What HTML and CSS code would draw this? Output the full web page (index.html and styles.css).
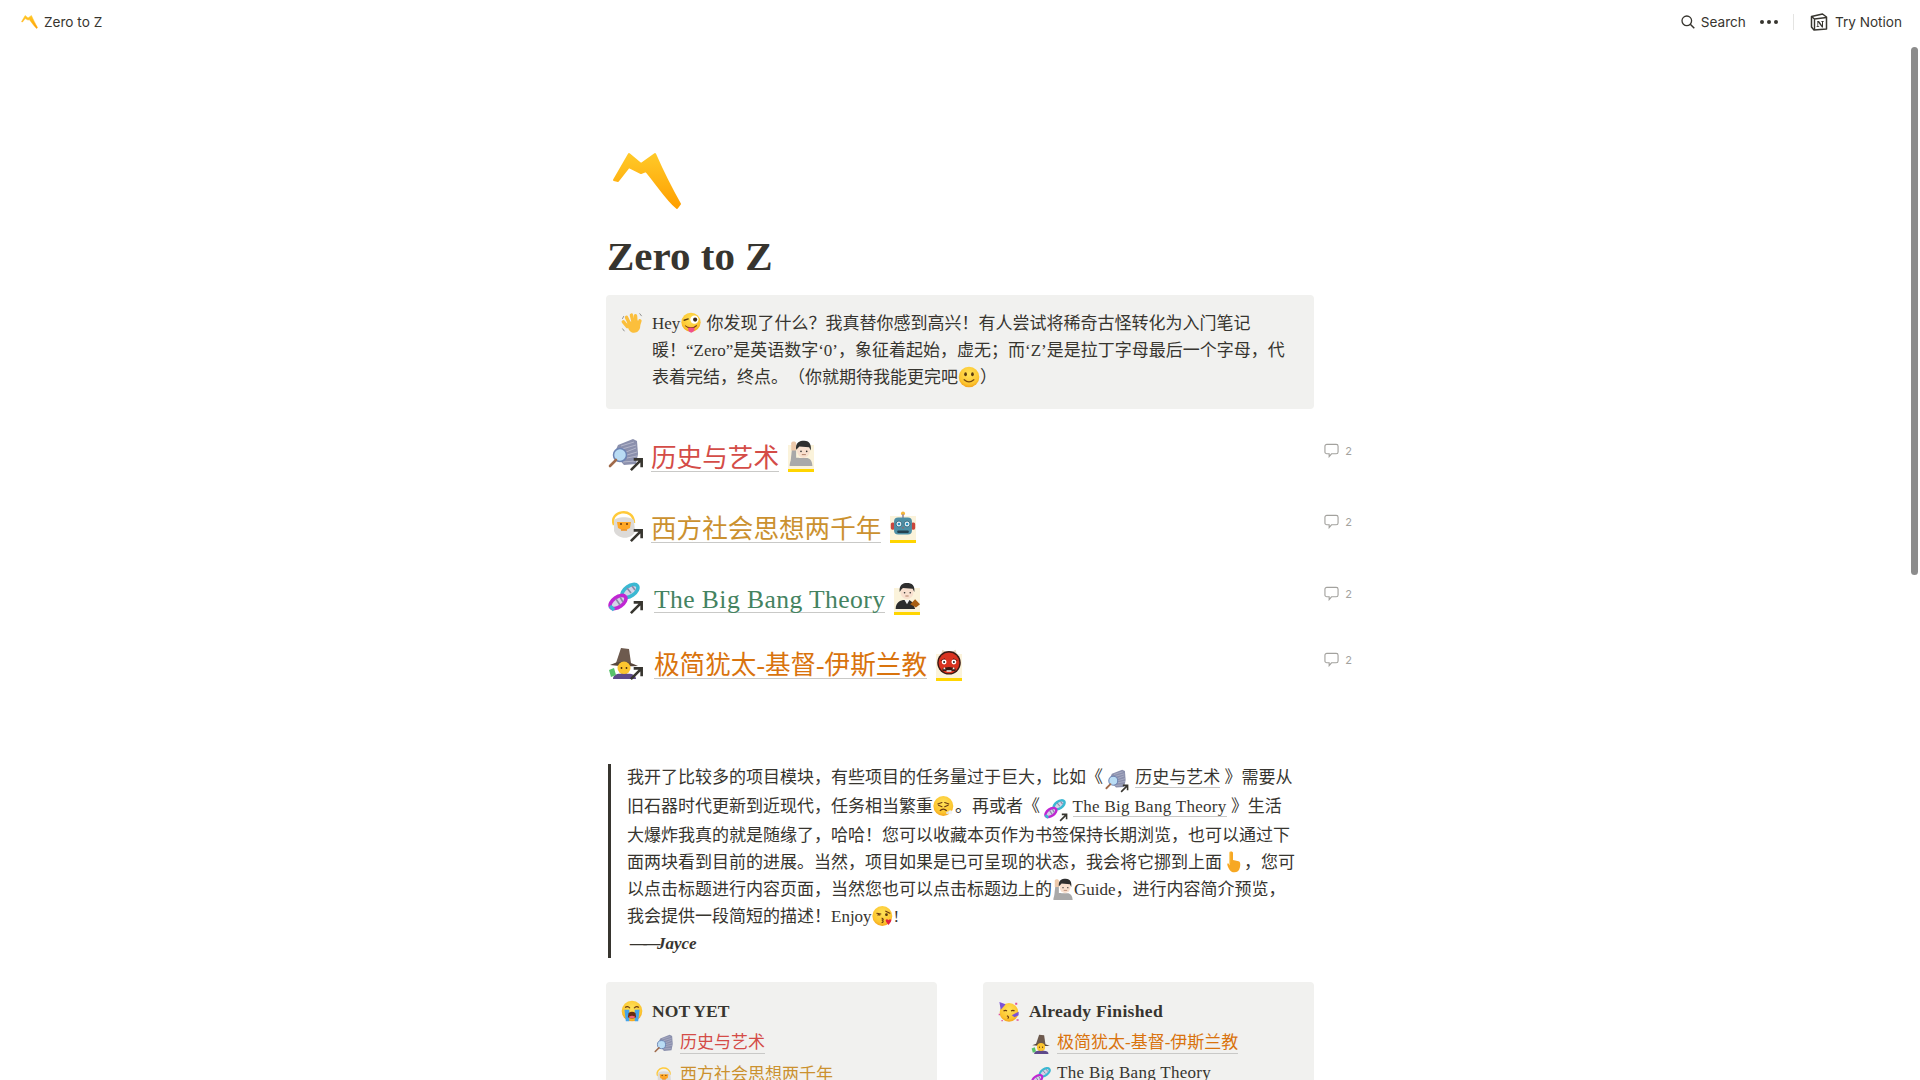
FILE: index.html
```html
<!DOCTYPE html>
<html>
	<head>
		<meta charset="utf-8">
		<title>Zero to Z</title>
		<link rel="stylesheet" href="styles.css">
	</head>
	<body>
		<svg class="defs" xmlns="http://www.w3.org/2000/svg">
			<defs>
				<linearGradient id="g-logo" x1="0" y1="0" x2="0" y2="1"><stop offset="0" stop-color="#ffc928"/><stop offset="1" stop-color="#ff9f00"/></linearGradient>
				<radialGradient id="g-face" cx=".5" cy=".35" r=".7"><stop offset="0" stop-color="#ffe259"/><stop offset=".7" stop-color="#fcc52f"/><stop offset="1" stop-color="#f29a17"/></radialGradient>
				<symbol id="e-logo" viewBox="0 0 70 58"><path d="M2 28 17 2 29 12 43 2C50 18 60 38 68 52L65 56C55 48 45 32 34 19L29 21 17 15 6 29Z" fill="url(#g-logo)" stroke="url(#g-logo)" stroke-width="2" stroke-linejoin="round"/></symbol>
				<symbol id="e-wave" viewBox="0 0 32 32"><g fill="#fbbf3c"><rect x="14" y="2" width="5" height="16" rx="2.5" transform="rotate(-14 16 10)"/><rect x="19" y="3" width="5" height="16" rx="2.5" transform="rotate(-4 21 11)"/><rect x="8" y="5" width="5" height="16" rx="2.5" transform="rotate(-26 10 13)"/><rect x="4" y="11" width="5" height="14" rx="2.5" transform="rotate(-40 6 18)"/><rect x="24" y="10" width="5" height="13" rx="2.5" transform="rotate(18 26 16)"/><path d="M9 15 24 12 28 20C28 27 23 31 17 30 12 29 9 23 9 15Z"/></g><path d="M2 10 4 6M2 24 5 28M27 2 30 6" stroke="#8c8c8c" stroke-width="1.4" fill="none"/></symbol>
				<symbol id="e-wink" viewBox="0 0 32 32"><circle cx="16" cy="15" r="14" fill="url(#g-face)"/><path d="M6 12 12 10" stroke="#5a3a10" stroke-width="2" stroke-linecap="round"/><circle cx="21" cy="11" r="6" fill="#fff"/><circle cx="22" cy="11" r="3" fill="#3a2a1a"/><path d="M7 19Q16 26 25 18L24 21Q16 28 8 21Z" fill="#7a3a18"/><path d="M12 23H21V27Q16 33 12 27Z" fill="#f0508a"/></symbol>
				<symbol id="e-smile" viewBox="0 0 32 32"><circle cx="16" cy="16" r="15" fill="url(#g-face)"/><ellipse cx="11" cy="12" rx="2" ry="3" fill="#5a3a10"/><ellipse cx="21" cy="12" rx="2" ry="3" fill="#5a3a10"/><path d="M9 20Q16 26 23 20" stroke="#7a4a10" stroke-width="1.8" fill="none" stroke-linecap="round"/></symbol>
				<symbol id="e-tablet" viewBox="0 0 32 32"><path d="M10 7 25 1 29 3 30 16 28 26 16 27 6 16Z" fill="#8b90ad"/><path d="M13 8 26 4M14 11 28 7M18 14 28 10M19 17 29 14M19 20 29 18M15 24 27 23" stroke="#b3b6ca" stroke-width="1"/><circle cx="12" cy="17" r="6.500" fill="#b9dcf4" stroke="#6d84b4" stroke-width="1.5"/><path d="M8 22 2 28" stroke="#a06a4a" stroke-width="2.6" stroke-linecap="round"/></symbol>
				<symbol id="e-raise" viewBox="0 0 32 32"><path d="M2 32C2 24 8 21 14 22H24C28 23 30 27 30 32Z" fill="#a9a9a9"/><path d="M3 28 5 10 10 10 10 24Z" fill="#a9a9a9"/><path d="M4 13V4C4 1 10 1 10 4V13Z" fill="#edc9ab"/><ellipse cx="19" cy="13" rx="8" ry="9" fill="#f8e0cf"/><path d="M10 12C9 3 14 1 20 1 27 1 29 7 28 13L26 9 14 8 12 10Z" fill="#2f2f2f"/><circle cx="16" cy="14" r="1" fill="#333"/><circle cx="23" cy="14" r="1" fill="#333"/><path d="M17 18H22" stroke="#a06a50" stroke-width="1"/></symbol>
				<symbol id="e-elder" viewBox="0 0 32 32"><path d="M6 16C0 2 26 -3 26 14" stroke="#ffca3a" stroke-width="2.4" fill="none"/><path d="M6 12C7 7 25 7 26 12L27 22C25 31 9 31 6 22Z" fill="#dcdad8"/><path d="M9 13H23L22 19Q16 23 10 19Z" fill="#ffa726"/><circle cx="13" cy="15" r="1" fill="#6a3a10"/><circle cx="19" cy="15" r="1" fill="#6a3a10"/><path d="M13 21H19" stroke="#ef8f20" stroke-width="1.5"/></symbol>
				<symbol id="e-robot" viewBox="0 0 32 32"><circle cx="16" cy="3" r="2.5" fill="#f4b63a"/><rect x="15" y="4" width="2" height="5" fill="#9a8aa0"/><rect x="1" y="14" width="5" height="9" rx="2" fill="#c9463d"/><rect x="26" y="14" width="5" height="9" rx="2" fill="#c9463d"/><rect x="5" y="8" width="22" height="21" rx="5" fill="#4d8fa5"/><circle cx="11" cy="16" r="3.6" fill="#e7f7fb" stroke="#2f5d70"/><circle cx="21" cy="16" r="3.6" fill="#e7f7fb" stroke="#2f5d70"/><circle cx="11" cy="16" r="1.6" fill="#2a93c4"/><circle cx="21" cy="16" r="1.6" fill="#2a93c4"/><path d="M15 20 16 22 17 20Z" fill="#c9463d"/><rect x="9" y="24" width="14" height="3" rx="1" fill="#23414f"/></symbol>
				<symbol id="e-dna" viewBox="0 0 32 32"><g fill="#d4d3e8" stroke-width="3.600"><ellipse cx="22" cy="10" rx="9" ry="5" transform="rotate(-35 22 10)" stroke="#3bb8d2"/><ellipse cx="10" cy="21" rx="9" ry="5" transform="rotate(-35 10 21)" stroke="#c026d3"/></g><path d="M2 25 6 29" stroke="#3bb8d2" stroke-width="3.600"/><path d="M8 18 12 24M12 16 15 21M19 7 23 12M24 5 27 9" stroke="#8b8aa8" stroke-width="1.600"/></symbol>
				<symbol id="e-judge" viewBox="0 0 32 32"><path d="M2 32C2 24 8 21 13 21H19L23 24 26 32Z" fill="#2c2c2c"/><path d="M13 21 16 26 19 21Z" fill="#f4f4f4"/><ellipse cx="16" cy="11" rx="8" ry="9" fill="#f8e0cf"/><path d="M7 11C6 2 11 0 16 0 22 0 26 3 25 11L23 7 11 6 9 8Z" fill="#2f2f2f"/><circle cx="13" cy="12" r="1" fill="#333"/><circle cx="20" cy="12" r="1" fill="#333"/><path d="M14 16H18" stroke="#a06a50"/><path d="M20 26 26 20 32 26 27 30Z" fill="#a85e12"/></symbol>
				<symbol id="e-witch" viewBox="0 0 32 32"><path d="M8 16 13 1 21 2 23 16Z" fill="#6d5a4e"/><path d="M2 18Q15 11 30 19Q16 20 2 18Z" fill="#57463c"/><circle cx="16" cy="21" r="6.5" fill="#fcc52f"/><circle cx="13.5" cy="21" r=".9" fill="#4a2c10"/><circle cx="18.500" cy="21" r=".9" fill="#4a2c10"/><path d="M5 32C5 27 10 26 16 27 23 26 28 27 28 32Z" fill="#5e4a8a"/><path d="M1 23 6 21 8 28 3 30Z" fill="#58c26a"/></symbol>
				<symbol id="e-ogre" viewBox="0 0 32 32"><path d="M6 7 8 1 13 4ZM26 7 24 1 19 4Z" fill="#e8d8c0"/><circle cx="16" cy="17" r="14.500" fill="#3a1a14"/><circle cx="16" cy="17" r="12.800" fill="#d9321f"/><path d="M5 14 12 16 11 11ZM27 14 20 16 21 11Z" fill="#7c1a12"/><circle cx="10" cy="16" r="3" fill="#fff"/><circle cx="22" cy="16" r="3" fill="#fff"/><circle cx="10" cy="16" r="1.200" fill="#222"/><circle cx="22" cy="16" r="1.200" fill="#222"/><path d="M8 24Q16 20 24 24V27H8Z" fill="#3a1a14"/><path d="M10 22 12 25H9ZM22 22 23 25H20ZM13 26H19V28H13Z" fill="#f4f0e6"/></symbol>
				<symbol id="e-tired" viewBox="0 0 32 32"><circle cx="15" cy="16" r="14.500" fill="url(#g-face)"/><path d="M7 13 13 11M23 13 17 11M8 15 13 17M22 15 17 17" stroke="#6a3a10" stroke-width="1.6" stroke-linecap="round"/><path d="M10 23Q15 18 20 23" stroke="#6a3a10" stroke-width="1.8" fill="none"/><circle cx="25" cy="25" r="3" fill="#f2f2f2"/><circle cx="21" cy="26" r="2" fill="#e2e2e2"/></symbol>
				<symbol id="e-point" viewBox="0 0 32 32"><path d="M11 3C11 0 16 0 16 3V13L24 15C27 16 27 20 26 24 25 29 22 31 18 31 13 31 10 27 8 21 7 18 9 17 10 19L11 21Z" fill="#f7a823"/><path d="M12 17V3C12 1 13 1 14 1L11 1 11 19Z" fill="#ffc84d"/></symbol>
				<symbol id="e-kiss" viewBox="0 0 32 32"><circle cx="15" cy="16" r="14.500" fill="url(#g-face)"/><path d="M7 12 13 13M20 9 26 12" stroke="#6a3a10" stroke-width="1.6" stroke-linecap="round"/><path d="M8 15Q10 13 12 15" stroke="#6a3a10" stroke-width="1.600" fill="none"/><circle cx="21" cy="14" r="2" fill="#5a3a10"/><path d="M14 19Q18 21 15 22Q18 24 14 26" stroke="#6a3a10" stroke-width="1.600" fill="none"/><path d="M21 25C18 21 22 19 24 22 26 19 30 21 27 25L24 29Z" fill="#e5213f"/></symbol>
				<symbol id="e-cry" viewBox="0 0 32 32"><circle cx="16" cy="16" r="15" fill="url(#g-face)"/><path d="M6 11Q10 8 13 12M19 12Q22 8 26 11" stroke="#6a3a10" stroke-width="1.800" fill="none"/><path d="M5 14H12V31H7ZM20 14H27L25 31H20Z" fill="#46a4ea"/><path d="M11 19Q16 15 21 19L22 25Q16 29 10 25Z" fill="#6a2c10"/><path d="M12 24Q16 22 20 24L21 25Q16 28 11 25Z" fill="#f0607a"/></symbol>
				<symbol id="e-party" viewBox="0 0 32 32"><circle cx="16" cy="18" r="13.500" fill="url(#g-face)"/><path d="M2 3 11 6 4 14Z" fill="#7b52d6"/><path d="M8 16Q11 14 13 16M19 16Q22 14 24 16" stroke="#6a3a10" stroke-width="1.800" fill="none"/><path d="M13 23Q17 25 14 27" stroke="#6a3a10" stroke-width="1.600" fill="none"/><path d="M20 22 30 17V22L24 25Z" fill="#7b52d6"/><path d="M25 4H28V7H25ZM1 20H3V22H1ZM27 28H30V30H27ZM5 29H7V31H5Z" fill="#e0509a"/></symbol>
				<symbol id="i-arrow" viewBox="0 0 16 16"><path d="M2 14 13.500 2.500M5 2.500H13.500V11" stroke="#37352f" stroke-width="2.800" fill="none"/></symbol>
				<symbol id="i-comment" viewBox="0 0 16 16"><path d="M3 1.500H13C14 1.500 15 2.500 15 3.500V9.500C15 10.500 14 11.500 13 11.500H8L5.500 14.500V11.500H3C2 11.500 1 10.500 1 9.500V3.500C1 2.500 2 1.500 3 1.500Z" fill="none" stroke="#a3a29e" stroke-width="1.200"/></symbol>
			</defs>
		</svg>

		<div class="topbar">
			<div class="crumb">
				<svg class="crumb-icon"><use href="#e-logo"/></svg>
				<span>Zero to Z</span>
			</div>
			<div class="actions">
				<svg class="search-icon" viewBox="0 0 14 14"><circle cx="5.800" cy="5.800" r="4.800" fill="none" stroke="#37352f" stroke-width="1.300"/><path d="M9.300 9.300 13.300 13.300" stroke="#37352f" stroke-width="1.500"/></svg>
				<span>Search</span>
				<span class="dots"><i></i><i></i><i></i></span>
				<span class="divider"></span>
				<svg class="notion-icon" viewBox="0 0 18 18"><path d="M1.500 3.500 12.500 1 16.500 4V16L4 17 1.500 14Z" fill="#fff" stroke="#37352f" stroke-width="1.500" stroke-linejoin="round"/><path d="M1.500 3.500 4.500 6 16.500 4.500M4.500 6V17" fill="none" stroke="#37352f" stroke-width="1.400"/><path d="M7.200 8H9L12 12.200V8.700H11.200V8H13.800V8.700H13V14.500H12L8.200 9.500V13.300H9.200V14H6.600V13.300H7.400V8.700H7.200Z" fill="#37352f"/></svg>
				<span>Try Notion</span>
			</div>
		</div>
		<div class="scrollbar"></div>

		<div class="page">
			<svg class="page-icon"><use href="#e-logo"/></svg>
			<h1 class="title">Zero to Z</h1>

			<div class="callout">
				<svg class="callout-icon"><use href="#e-wave"/></svg>
				<div class="callout-text">
					Hey<svg class="emoji"><use href="#e-wink"/></svg> 你发现了什么？我真替你感到高兴！有人尝试将稀奇古怪转化为入门笔记<br>
					暖！“Zero”是英语数字‘0’，象征着起始，虚无；而‘Z’是是拉丁字母最后一个字母，代<br>
					表着完结，终点。（你就期待我能更完吧<svg class="emoji"><use href="#e-smile"/></svg>）
				</div>
			</div>

			<div class="row row-1">
				<span class="row-icon"><svg class="big"><use href="#e-tablet"/></svg><svg class="arrow"><use href="#i-arrow"/></svg></span>
				<a class="row-link red">历史与艺术</a>
				<span class="mark"><svg><use href="#e-raise"/></svg></span>
				<span class="comments"><svg><use href="#i-comment"/></svg>2</span>
			</div>
			<div class="row row-2">
				<span class="row-icon"><svg class="big"><use href="#e-elder"/></svg><svg class="arrow"><use href="#i-arrow"/></svg></span>
				<a class="row-link yellow">西方社会思想两千年</a>
				<span class="mark"><svg><use href="#e-robot"/></svg></span>
				<span class="comments"><svg><use href="#i-comment"/></svg>2</span>
			</div>
			<div class="row row-3">
				<span class="row-icon wide"><svg class="big"><use href="#e-dna"/></svg><svg class="arrow"><use href="#i-arrow"/></svg></span>
				<a class="row-link latin green">The Big Bang Theory</a>
				<span class="mark"><svg><use href="#e-judge"/></svg></span>
				<span class="comments"><svg><use href="#i-comment"/></svg>2</span>
			</div>
			<div class="row row-4">
				<span class="row-icon wide"><svg class="big"><use href="#e-witch"/></svg><svg class="arrow"><use href="#i-arrow"/></svg></span>
				<a class="row-link orange">极简犹太-基督-伊斯兰教</a>
				<span class="mark"><svg><use href="#e-ogre"/></svg></span>
				<span class="comments"><svg><use href="#i-comment"/></svg>2</span>
			</div>

			<blockquote class="quote">
				<div class="quote-text">
					我开了比较多的项目模块，有些项目的任务量过于巨大，比如《<span class="mention first"><svg class="emoji m"><use href="#e-tablet"/></svg><svg class="arrow"><use href="#i-arrow"/></svg></span> <a class="inline-link">历史与艺术</a> 》需要从<br>
					旧石器时代更新到近现代，任务相当繁重<svg class="emoji"><use href="#e-tired"/></svg>。再或者《 <span class="mention tall"><svg class="emoji m"><use href="#e-dna"/></svg><svg class="arrow"><use href="#i-arrow"/></svg></span> <a class="inline-link latin">The Big Bang Theory</a> 》生活<br>
					大爆炸我真的就是随缘了，哈哈！您可以收藏本页作为书签保持长期浏览，也可以通过下<br>
					面两块看到目前的进展。当然，项目如果是已可呈现的状态，我会将它挪到上面<svg class="emoji"><use href="#e-point"/></svg>，您可<br>
					以点击标题进行内容页面，当然您也可以点击标题边上的<svg class="emoji"><use href="#e-raise"/></svg>Guide，进行内容简介预览，<br>
					我会提供一段简短的描述！Enjoy<svg class="emoji"><use href="#e-kiss"/></svg>!<br>
					<b class="sign"><span class="dash">——</span>Jayce</b>
				</div>
			</blockquote>

			<div class="columns">
				<div class="column">
					<div class="column-head"><svg class="callout-icon"><use href="#e-cry"/></svg><b class="caps">NOT&nbsp; YET</b></div>
					<div class="item"><svg class="item-icon"><use href="#e-tablet"/></svg><a class="item-link red">历史与艺术</a></div>
					<div class="item"><svg class="item-icon"><use href="#e-elder"/></svg><a class="item-link yellow">西方社会思想两千年</a></div>
				</div>
				<div class="column">
					<div class="column-head"><svg class="callout-icon"><use href="#e-party"/></svg><b class="latin">Already Finished</b></div>
					<div class="item"><svg class="item-icon"><use href="#e-witch"/></svg><a class="item-link orange">极简犹太-基督-伊斯兰教</a></div>
					<div class="item"><svg class="item-icon"><use href="#e-dna"/></svg><a class="item-link latin">The Big Bang Theory</a></div>
				</div>
			</div>
		</div>
	</body>
</html>
```

FILE: styles.css
```css
html, body {
	margin: 0;
	height: 1080px;
	overflow: hidden;
	background: #fff;
}
body {
	color: #37352f;
	font-family: "Liberation Serif", "Noto Sans CJK SC", serif;
	font-size: 17px;
	text-spacing-trim: space-all;
}
a {
	color: inherit;
}
.latin {
	letter-spacing: .3px;
}
.defs {
	position: absolute;
	width: 0;
	height: 0;
}
.topbar {
	display: flex;
	justify-content: space-between;
	align-items: center;
	height: 44px;
	padding: 0 18px 0 21px;
	font-family: Inter, "Liberation Sans", sans-serif;
	font-size: 13.6px;
}
.crumb, .actions {
	display: flex;
	align-items: center;
}
.crumb-icon {
	width: 17px;
	height: 14px;
	margin-right: 6px;
}
.search-icon {
	width: 14px;
	height: 14px;
	margin-right: 6px;
}
.dots {
	display: flex;
	gap: 3px;
	margin-left: 14px;
}
.dots i {
	width: 4px;
	height: 4px;
	border-radius: 50%;
	background: #37352f;
}
.divider {
	width: 1px;
	height: 16px;
	margin: 0 16px 0 15px;
	background: #e4e4e2;
}
.notion-icon {
	width: 18px;
	height: 18px;
	margin-right: 7px;
}
.scrollbar {
	position: absolute;
	top: 47px;
	right: 2px;
	width: 7px;
	height: 528px;
	border-radius: 4px;
	background: #8c8c8c;
}
.page {
	width: 708px;
	margin: 0 auto;
}
.page-icon {
	display: block;
	width: 70px;
	height: 58px;
	margin: 108px 0 0 6px;
}
.title {
	margin: 22px 0 0 1px;
	font-size: 41px;
	line-height: 48px;
	font-weight: 700;
}
.callout {
	display: flex;
	gap: 9px;
	box-sizing: border-box;
	height: 114px;
	margin-top: 15px;
	padding: 15px 12px;
	border-radius: 4px;
	background: #f1f1ef;
}
.callout-icon {
	flex: none;
	width: 22px;
	height: 22px;
	margin: 2px 0 0 3px;
}
.callout-text {
	line-height: 27px;
	white-space: nowrap;
}
.emoji {
	width: 22px;
	height: 22px;
	vertical-align: -5px;
}
.row {
	display: flex;
	align-items: flex-start;
	width: 746px;
	padding-left: 2px;
	box-sizing: border-box;
}
.row-1 {
	height: 71px;
	margin-top: 29px;
}
.row-2 {
	height: 72px;
}
.row-3 {
	height: 66px;
}
.row-4 {
	height: 120px;
}
.row-icon {
	position: relative;
	flex: none;
	width: 36px;
	height: 34px;
	margin-right: 7px;
}
.row-icon.wide {
	margin-right: 10px;
}
.big {
	display: block;
	width: 32px;
	height: 32px;
}
.arrow {
	position: absolute;
	right: 0;
	bottom: 0;
	width: 15px;
	height: 15px;
}
.row-link {
	margin-top: 8px;
	font-size: 25.6px;
	line-height: 25px;
	border-bottom: 1px solid #c9c9c7;
}
.row-link.latin {
	letter-spacing: .42px;
}
.wide + .row-link {
	margin-top: 6px;
}
.red {
	color: #d44c47;
}
.yellow {
	color: #cb912f;
}
.green {
	color: #448361;
}
.orange {
	color: #d9730d;
}
.mark {
	display: block;
	width: 26px;
	height: 24px;
	margin: 7px 0 0 9px;
	background: #fbf3db;
	border-bottom: 3px solid #ffd500;
}
.mark svg {
	display: block;
	width: 26px;
	height: 26px;
	margin-top: -5px;
}
.comments {
	display: flex;
	align-items: center;
	gap: 6px;
	margin: 5px 0 0 auto;
	font-family: Inter, "Liberation Sans", sans-serif;
	font-size: 11px;
	color: #a3a29e;
}
.comments svg {
	width: 15px;
	height: 15px;
}
.quote {
	margin: 0 0 0 2px;
	padding: 0 0 1px 16px;
	border-left: 3px solid #37352f;
}
.quote-text {
	margin-top: -3px;
	line-height: 27px;
	white-space: nowrap;
}
.mention {
	position: relative;
	display: inline-block;
	width: 24px;
	height: 24px;
	margin: -6px 0 0;
	vertical-align: -5px;
}
.mention.first {
	margin-left: 2px;
	margin-right: 2px;
}
.mention.tall {
	margin-top: 1px;
}
.mention .m {
	width: 22px;
	height: 22px;
	vertical-align: top;
}
.mention .arrow {
	width: 9px;
	height: 9px;
}
.inline-link {
	border-bottom: 1px solid #c9c9c7;
}
.sign {
	margin-left: 3px;
	font-style: italic;
}
.dash {
	letter-spacing: -3.5px;
}
.columns {
	display: flex;
	gap: 46px;
	margin-top: 24px;
}
.column {
	flex: 1;
	height: 200px;
	padding: 15px 12px;
	box-sizing: border-box;
	border-radius: 4px;
	background: #f1f1ef;
}
.column-head {
	display: flex;
	gap: 9px;
	align-items: center;
	height: 28px;
	font-size: 17.6px;
}
.column-head .callout-icon {
	margin-top: 0;
}
.caps {
	word-spacing: -2.5px;
}
.item {
	display: flex;
	align-items: center;
	height: 32px;
	margin-left: 36px;
}
.item-icon {
	width: 20px;
	height: 20px;
	margin-right: 6px;
	margin-top: 5px;
}
.item-link {
	border-bottom: 1px solid #c9c9c7;
}
```
